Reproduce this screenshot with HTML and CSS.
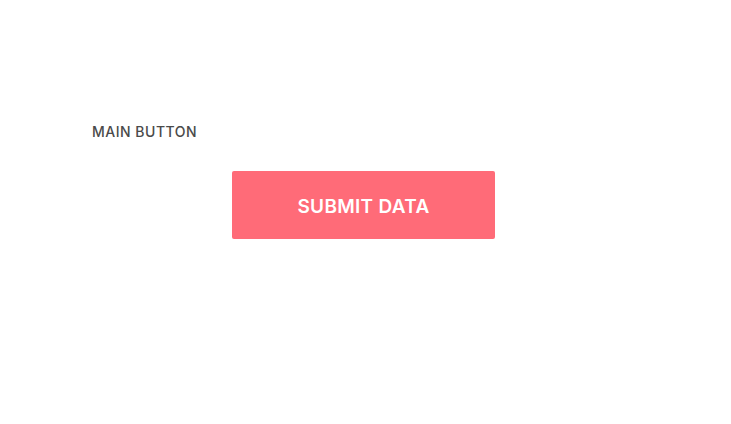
FILE: index.html
```html
<!DOCTYPE html>
<html>
<head>
<meta charset="utf-8">
<link rel="stylesheet" href="styles.css">
</head>
<body>
<main class="page">
  <div class="label">MAIN BUTTON</div>
  <div class="button-row">
    <button class="btn-primary">SUBMIT DATA</button>
  </div>
</main>
</body>
</html>
```
FILE: styles.css
```css
html, body {
  margin: 0;
  padding: 0;
  background: #ffffff;
}
.page {
  padding: 123px 0 0 92px;
  font-family: Inter, "Liberation Sans", sans-serif;
}
.label {
  font-size: 14px;
  line-height: 17px;
  font-weight: 500;
  color: #4a4a4a;
  letter-spacing: 0.5px;
}
.button-row {
  display: flex;
  padding: 31px 0 0 140px;
}
.btn-primary {
  width: 263px;
  height: 68px;
  border: none;
  border-radius: 2px;
  background: #ff6b78;
  color: #ffffff;
  font-family: Inter, "Liberation Sans", sans-serif;
  font-size: 19px;
  font-weight: 600;
  letter-spacing: 0.3px;
  padding: 2px 0 0 0;
  cursor: pointer;
}
```
